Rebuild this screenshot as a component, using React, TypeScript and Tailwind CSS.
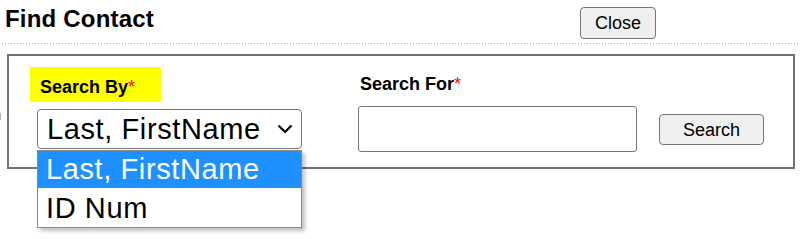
import React from "react";

export default function App() {
  return (
    <div className="relative w-[800px] h-[239px] bg-white text-black font-['Liberation_Sans',Arial,sans-serif] overflow-hidden">
      {/* Header */}
      <div className="flex h-[43px] items-start">
        <h1 className="ml-[5px] mt-[5px] text-[24px] leading-[28px] font-bold tracking-[0.2px] w-[575px]">Find Contact</h1>
        <button className="mt-[7px] w-[76px] h-[32px] bg-[#efefef] border border-[#767676] rounded-[4px] text-[18px] leading-[20px] text-black">
          Close
        </button>
      </div>
      <div className="ml-[2px] h-[1px] bg-[repeating-linear-gradient(90deg,#a6a6d8_0px,#a6a6d8_1px,transparent_1px,transparent_3px)]" />

      {/* Box row */}
      <div className="flex mt-[10px]">
        <div className="w-[7px] shrink-0">
          <div className="mt-[59px] w-[1px] h-[7px] bg-[#b5b5b5]" />
        </div>
        <div className="w-[788px] h-[115px] border-2 border-[#737373] flex">
          {/* Left column */}
          <div className="ml-[21px] w-[272px] flex flex-col">
            <div className="mt-[11px] w-[131px] h-[35px] bg-[#ffff00] pl-[10px] pt-[10px] text-[18px] leading-[20px] font-bold">
              Search By<span className="text-[#ff0000] font-normal">*</span>
            </div>
            <div className="mt-[7px] ml-[7px] w-[265px] h-[40px] border border-[#767676] rounded-[4px] bg-white flex items-center pl-[9px] pr-[8px]">
              <span className="flex-1 text-[29px] leading-[32px] tracking-[0.6px] whitespace-nowrap">Last, FirstName</span>
              <svg width="16" height="10" viewBox="0 0 16 10" className="shrink-0">
                <path d="M1.5 1.5 L8 8 L14.5 1.5" fill="none" stroke="#000" strokeWidth="2.2" />
              </svg>
            </div>
          </div>
          {/* Right column */}
          <div className="ml-[56px] flex flex-col">
            <div className="mt-[18px] ml-[2px] text-[18px] leading-[20px] font-bold">
              Search For<span className="text-[#ff0000] font-normal">*</span>
            </div>
            <div className="mt-[12px] flex items-start">
              <div className="w-[279px] h-[46px] border border-[#767676] rounded-[3px] bg-white" />
              <button className="ml-[22px] mt-[8px] w-[105px] h-[31px] bg-[#efefef] border border-[#767676] rounded-[4px] text-[18px] leading-[20px] text-black">
                Search
              </button>
            </div>
          </div>
        </div>
      </div>

      {/* Open dropdown list */}
      <div className="absolute left-[37px] top-[150px] w-[265px] border border-[#8a8a8a] bg-white shadow-[3px_3px_4px_rgba(0,0,0,0.25)]">
        <div className="h-[37px] bg-[#1e90ff] text-white pl-[8px] text-[29px] leading-[37px] tracking-[0.6px] whitespace-nowrap">
          Last, FirstName
        </div>
        <div className="h-[39px] pl-[8px] pt-[2px] text-[29px] leading-[37px] tracking-[0.6px] whitespace-nowrap">
          ID Num
        </div>
      </div>
    </div>
  );
}
